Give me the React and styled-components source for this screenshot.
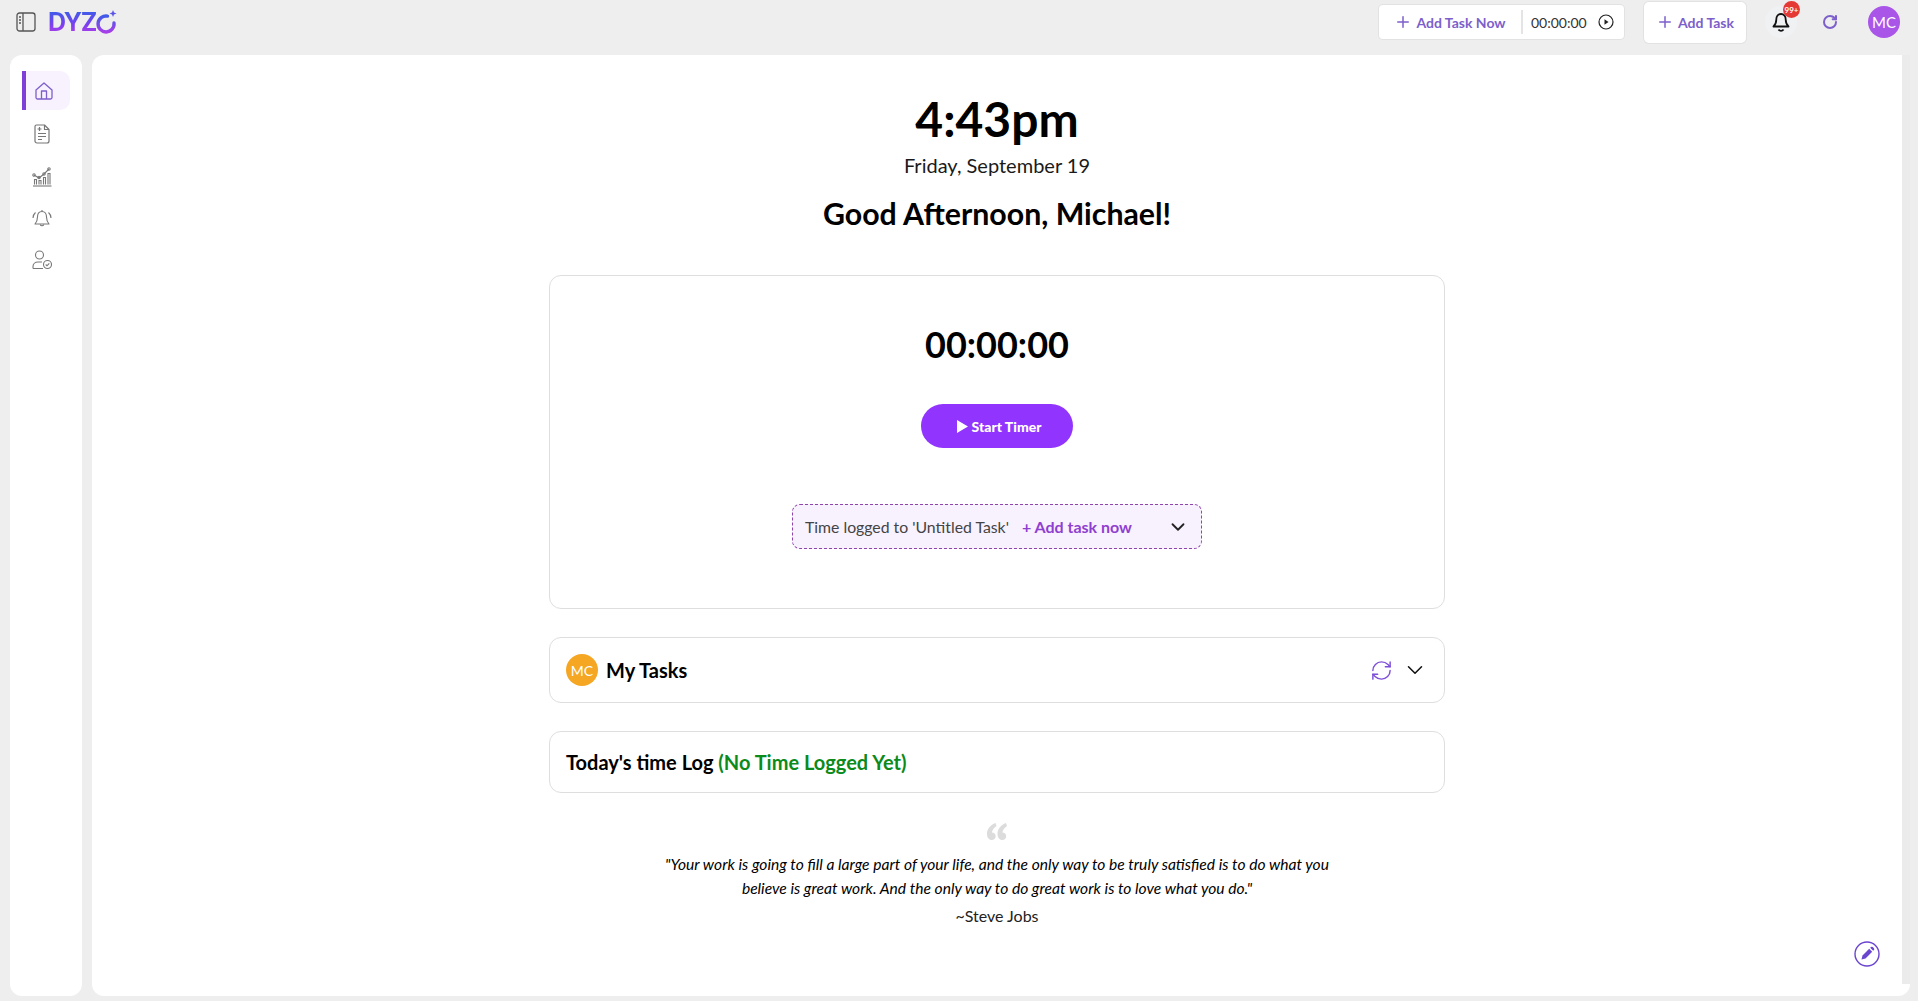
import styled, { createGlobalStyle } from 'styled-components'
import { ChevronDown, Plus, RefreshCw, RotateCw } from 'lucide-react'

const GlobalStyle = createGlobalStyle`
  html, body {
    margin: 0;
    padding: 0;
    height: 100%;
    overflow: hidden;
    background: #eeeeee;
    font-family: Lato, "Open Sans", sans-serif;
    color: #000;
  }
  * { box-sizing: border-box; }
`

const Page = styled.div`
  width: 1918px;
  height: 1001px;
  display: flex;
  flex-direction: column;
  background: #eeeeee;
`

const TopBar = styled.header`
  height: 55px;
  display: flex;
  align-items: center;
  justify-content: space-between;
  padding: 0 18px 11px 16px;
`

const Brand = styled.div`
  display: flex;
  align-items: center;
  gap: 12px;
`

const LogoWrap = styled.div`
  display: flex;
  align-items: center;
`

const LogoText = styled.span`
  font-family: Inter, Lato, sans-serif;
  font-size: 25px;
  font-weight: 700;
  line-height: 26px;
  letter-spacing: -1.2px;
  background: linear-gradient(180deg, #3f5be8 10%, #7b3ff0 60%, #a63fe8 90%);
  -webkit-background-clip: text;
  background-clip: text;
  color: transparent;
`

const Actions = styled.div`
  display: flex;
  align-items: center;
`

const TimerGroup = styled.div`
  width: 245px;
  height: 34px;
  background: #fff;
  border-radius: 4px;
  box-shadow: 0 0 0 1px #e2e2e2;
  display: flex;
  align-items: center;
  margin-right: 20px;
`

const AddNow = styled.div`
  width: 144px;
  height: 24px;
  border-right: 2px solid #e4e4e4;
  display: flex;
  align-items: center;
  justify-content: center;
  gap: 4px;
`

const ActionLabel = styled.span`
  font-size: 14px;
  font-weight: 700;
  color: #7d5fcb;
  white-space: nowrap;
`

const ClockText = styled.span`
  font-size: 14px;
  color: #333;
  margin-left: 8px;
  margin-right: 11px;
`

const AddTaskButton = styled.div`
  width: 102px;
  height: 41px;
  background: #fff;
  border-radius: 5px;
  box-shadow: 0 0 0 1px #e2e2e2;
  display: flex;
  align-items: center;
  justify-content: center;
  gap: 4px;
  margin-right: 19px;
`

const BellWrap = styled.div`
  position: relative;
  width: 32px;
  height: 32px;
  border-radius: 50%;
  background: #f0f1f3;
  display: flex;
  align-items: center;
  justify-content: center;
  margin-right: 25px;
`

const BellBadge = styled.span`
  position: absolute;
  top: -5px;
  right: -3px;
  width: 17px;
  height: 17px;
  border-radius: 50%;
  background: #e53935;
  color: #fff;
  font-size: 8px;
  font-weight: 700;
  display: flex;
  align-items: center;
  justify-content: center;
`

const Reload = styled.div`
  display: flex;
  color: #7d5fcb;
  margin-right: 30px;
`

const Avatar = styled.div`
  width: ${(props) => props.size}px;
  height: ${(props) => props.size}px;
  border-radius: 50%;
  background: ${(props) => props.bg};
  color: #fff;
  font-size: ${(props) => props.fs}px;
  display: flex;
  align-items: center;
  justify-content: center;
  flex-shrink: 0;
`

const Body = styled.div`
  flex: 1;
  display: flex;
  padding: 0 8px 5px 10px;
  min-height: 0;
`

const Sidebar = styled.nav`
  width: 72px;
  background: #fff;
  border-radius: 12px;
  padding: 16px 12px 0 12px;
  display: flex;
  flex-direction: column;
  margin-right: 10px;
`

const NavItem = styled.div`
  height: 39px;
  width: 48px;
  margin-bottom: ${(props) => props.gap}px;
  padding-right: 9px;
  display: flex;
  align-items: center;
  justify-content: center;
  border-radius: 0 10px 10px 0;
  ${(props) => props.active && `
    background: #f8f1fe;
    border-left: 4px solid #7e3fd8;
  `}
`

const Main = styled.main`
  flex: 1;
  background: #fff;
  border-radius: 12px 0 12px 12px;
  display: flex;
`

const Content = styled.div`
  flex: 1;
  display: flex;
  flex-direction: column;
  align-items: center;
  position: relative;
`

const Scrollbar = styled.div`
  width: 8px;
  background: #ebebeb;
  margin-bottom: 12px;
`

const Clock = styled.h1`
  margin: 34px 0 0;
  font-size: 48px;
  line-height: 60px;
  font-weight: 700;
`

const DateLine = styled.div`
  font-size: 20px;
  line-height: 24px;
  margin-top: 4px;
  color: #1a1a1a;
`

const Greeting = styled.h2`
  margin: 18px 0 0;
  font-size: 30.3px;
  line-height: 36px;
  font-weight: 700;
`

const TimerCard = styled.section`
  width: 896px;
  height: 334px;
  margin-top: 44px;
  border: 1px solid #dedede;
  border-radius: 12px;
  display: flex;
  flex-direction: column;
  align-items: center;
`

const BigTimer = styled.div`
  margin-top: 45px;
  font-size: 36px;
  line-height: 46px;
  font-weight: 700;
`

const StartButton = styled.button`
  width: 152px;
  height: 44px;
  margin-top: 37px;
  padding: 0 0 0 4px;
  border: 0;
  border-radius: 22px;
  background: #9134fd;
  color: #fff;
  font-family: inherit;
  font-size: 14px;
  font-weight: 900;
  display: flex;
  align-items: center;
  justify-content: center;
  gap: 4px;
`

const TaskPicker = styled.div`
  width: 410px;
  height: 45px;
  margin-top: 56px;
  padding: 0 12px 0 12px;
  background: #f8f1fe;
  border: 1px dashed #8e44ad;
  border-radius: 8px;
  display: flex;
  align-items: center;
`

const PickerText = styled.span`
  font-size: 15.8px;
  color: #444;
  white-space: nowrap;
`

const PickerLink = styled.span`
  font-size: 16px;
  font-weight: 700;
  color: #8f3fd0;
  margin-left: 13px;
  white-space: nowrap;
  flex: 1;
`

const Panel = styled.section`
  width: 896px;
  height: ${(props) => props.h}px;
  margin-top: ${(props) => props.mt}px;
  border: 1px solid #dedede;
  border-radius: 12px;
  padding: 0 16px;
  display: flex;
  align-items: center;
`

const PanelTitle = styled.span`
  font-size: 20px;
  font-weight: 700;
  margin-left: ${(props) => props.ml || 0}px;
  flex: ${(props) => (props.grow ? 1 : 'none')};
`

const GreenNote = styled.span`
  color: #0c8a1a;
`

const RoundIcon = styled.div`
  display: flex;
  color: ${(props) => props.color};
  margin-left: ${(props) => props.ml || 0}px;
`

const QuoteBlock = styled.div`
  margin-top: 30px;
  width: 680px;
  display: flex;
  flex-direction: column;
  align-items: center;
  text-align: center;
`

const QuoteText = styled.p`
  margin: 12px 0 0;
  font-size: 15.6px;
  line-height: 24px;
  font-style: italic;
`

const QuoteAuthor = styled.div`
  font-size: 16px;
  line-height: 24px;
  margin-top: 4px;
  color: #222;
`

const EditBadge = styled.div`
  position: absolute;
  right: 22px;
  bottom: 29px;
  display: flex;
`

const PanelToggle = () => (
  <svg width="20" height="20" viewBox="0 0 20 20" fill="none" stroke="#555" strokeWidth="1.3">
    <rect x="1" y="1" width="18" height="18" rx="2.500" />
    <path d="M7 1v18" />
    <path d="M3 5h2M3 8h2M3 11h2" strokeWidth="1.500" />
  </svg>
)

const LogoMark = () => (
  <svg width="21" height="26" viewBox="0 0 21 26" fill="none">
    <defs>
      <linearGradient id="logoO" x1="0" y1="0" x2="0" y2="1">
        <stop offset="0" stopColor="#3f5be8" />
        <stop offset="1" stopColor="#a63fe8" />
      </linearGradient>
    </defs>
    <path d="M11.500 7.100A8 8 0 1 0 18 14" stroke="url(#logoO)" strokeWidth="3.400" strokeLinecap="round" />
    <path d="M17 1l1 2.500 2.500 1-2.500 1-1 2.500-1-2.500-2.500-1 2.500-1z" fill="#5a55e8" />
  </svg>
)

const HomeIcon = () => (
  <svg width="20" height="20" viewBox="0 0 20 20" fill="none" stroke="#7d5fcb" strokeWidth="1.300" strokeLinejoin="round">
    <path d="M2 9l8-7 8 7v7.500a1.500 1.500 0 0 1-1.500 1.500h-13A1.500 1.500 0 0 1 2 16.500z" />
    <path d="M7.500 18v-8h5v8" />
  </svg>
)

const NoteIcon = () => (
  <svg width="16" height="20" viewBox="0 0 16 20" fill="none" stroke="#777" strokeWidth="1.200" strokeLinejoin="round">
    <path d="M2.500 1h8L15 5.500V17a2 2 0 0 1-2 2H3a2 2 0 0 1-2-2V2.500A1.500 1.500 0 0 1 2.500 1z" />
    <path d="M10.500 1v4.500H15" />
    <path d="M3.500 5h4M5.500 3v4M4 9.500h8M4 12.500h8M4 15.500h4" />
  </svg>
)

const ChartIcon = () => (
  <svg width="20" height="20" viewBox="0 0 20 20" fill="none" stroke="#777" strokeWidth="1.100">
    <path d="M1 19h18.500" />
    <path d="M2.500 17.500v-5h2v5M7 17.500v-4h2v4M11.500 17.500v-7h2v7M16 17.500v-11h2v11" />
    <path d="M2 8l5 3 5-4 5-5" />
    <circle cx="2" cy="8" r="1.200" />
    <circle cx="7" cy="10.500" r="1.200" />
    <circle cx="12" cy="7" r="1.200" />
    <circle cx="17" cy="2" r="1.200" />
  </svg>
)

const RingIcon = () => (
  <svg width="20" height="20" viewBox="0 0 20 20" fill="none" stroke="#777" strokeWidth="1.100" strokeLinejoin="round">
    <path d="M10 2.500c-3 0-4.500 2.500-4.500 5.500 0 3.500-1.300 5.500-2.500 7h14c-1.200-1.500-2.500-3.500-2.500-7 0-3-1.500-5.500-4.500-5.500z" />
    <path d="M8.200 15.500a1.900 1.900 0 0 0 3.600 0M10 1v1.500" />
    <path d="M3.500 3.500C1.800 5 1 7 1 9M16.500 3.500C18.200 5 19 7 19 9" />
  </svg>
)

const UserCheckIcon = () => (
  <svg width="20" height="20" viewBox="0 0 20 20" fill="none" stroke="#777" strokeWidth="1.100">
    <circle cx="7.500" cy="5" r="4" />
    <path d="M1 18.500v-2c0-2.500 2-4.500 5-4.500h4M1 18.500h10" />
    <circle cx="15.500" cy="14.500" r="4" />
    <path d="M13.700 14.500l1.300 1.300 2.300-2.500" />
  </svg>
)

const PlayCircle = () => (
  <svg width="16" height="16" viewBox="0 0 16 16" fill="none">
    <circle cx="8" cy="8" r="7" stroke="#222" strokeWidth="1.200" />
    <path d="M6.500 5.200l4 2.800-4 2.800z" fill="#222" />
  </svg>
)

const BellIcon = () => (
  <svg width="18" height="20" viewBox="0 0 18 20" fill="none" stroke="#111" strokeWidth="1.800" strokeLinejoin="round">
    <path d="M9 2C6 2 4.300 4.300 4.300 7.500c0 3.500-1.300 5.500-2.800 7h15c-1.500-1.500-2.800-3.500-2.800-7C13.700 4.300 12 2 9 2z" />
    <path d="M6.500 17.500a3 3 0 0 0 5 0" />
  </svg>
)

const PlayTriangle = () => (
  <svg width="11" height="13" viewBox="0 0 11 13">
    <path d="M0 0l11 6.500L0 13z" fill="#fff" />
  </svg>
)

const QuoteMark = () => (
  <svg width="20" height="17" viewBox="0 0 20 17" fill="#dcdcdc">
    <path d="M8.500 0C3.500 2 0 5.500 0 11c0 3.500 2 6 4.700 6 2.300 0 4-1.600 4-3.800 0-2.300-1.600-3.800-3.800-3.800 .3-2.500 2-4.700 4.600-6.500z" />
    <path d="M19 0c-5 2-8.500 5.500-8.500 11 0 3.500 2 6 4.700 6 2.300 0 4-1.600 4-3.800 0-2.300-1.600-3.800-3.800-3.800 .3-2.500 2-4.700 4.600-6.500z" />
  </svg>
)

const EditIcon = () => (
  <svg width="26" height="26" viewBox="0 0 26 26" fill="none">
    <circle cx="13" cy="13" r="12" stroke="#6a45cf" strokeWidth="1.400" />
    <path d="M7.500 18.500l1-4 6.700-6.700 3 3-6.700 6.700z" fill="#6a45cf" />
    <path d="M16.200 6.800l3 3 .7-.8a1.300 1.300 0 0 0 0-1.800l-1.100-1.100a1.300 1.300 0 0 0-1.800 0z" fill="#6a45cf" />
  </svg>
)

const navItems = [
  { icon: <HomeIcon />, gap: 4, active: true },
  { icon: <NoteIcon />, gap: 4 },
  { icon: <ChartIcon />, gap: 3 },
  { icon: <RingIcon />, gap: 2 },
  { icon: <UserCheckIcon />, gap: 0 },
]

const App = () => {
  return (
    <Page>
      <GlobalStyle />
      <TopBar>
        <Brand>
          <PanelToggle />
          <LogoWrap>
            <LogoText>DYZ</LogoText>
            <LogoMark />
          </LogoWrap>
        </Brand>
        <Actions>
          <TimerGroup>
            <AddNow>
              <Plus size={18} color="#7d5fcb" />
              <ActionLabel>Add Task Now</ActionLabel>
            </AddNow>
            <ClockText>00:00:00</ClockText>
            <PlayCircle />
          </TimerGroup>
          <AddTaskButton>
            <Plus size={18} color="#7d5fcb" />
            <ActionLabel>Add Task</ActionLabel>
          </AddTaskButton>
          <BellWrap>
            <BellIcon />
            <BellBadge>99+</BellBadge>
          </BellWrap>
          <Reload>
            <RotateCw size={16} strokeWidth={3} />
          </Reload>
          <Avatar size={32} bg="#a855e8" fs={15}>MC</Avatar>
        </Actions>
      </TopBar>
      <Body>
        <Sidebar>
          {navItems.map((item, i) => (
            <NavItem key={i} active={item.active} gap={item.gap}>
              {item.icon}
            </NavItem>
          ))}
        </Sidebar>
        <Main>
          <Content>
            <Clock>4:43pm</Clock>
            <DateLine>Friday, September 19</DateLine>
            <Greeting>Good Afternoon, Michael!</Greeting>
            <TimerCard>
              <BigTimer>00:00:00</BigTimer>
              <StartButton>
                <PlayTriangle />
                Start Timer
              </StartButton>
              <TaskPicker>
                <PickerText>Time logged to 'Untitled Task'</PickerText>
                <PickerLink>+ Add task now</PickerLink>
                <ChevronDown size={22} color="#222" />
              </TaskPicker>
            </TimerCard>
            <Panel h={66} mt={28}>
              <Avatar size={32} bg="#f5a623" fs={14}>MC</Avatar>
              <PanelTitle ml={8} grow>My Tasks</PanelTitle>
              <RoundIcon color="#7d4fd8"><RefreshCw size={23} strokeWidth={1.5} /></RoundIcon>
              <RoundIcon color="#111" ml={9}><ChevronDown size={26} strokeWidth={1.4} /></RoundIcon>
            </Panel>
            <Panel h={62} mt={28}>
              <PanelTitle>Today's time Log <GreenNote>(No Time Logged Yet)</GreenNote></PanelTitle>
            </Panel>
            <QuoteBlock>
              <QuoteMark />
              <QuoteText>
                "Your work is going to fill a large part of your life, and the only way to be truly satisfied is to do what you believe is great work. And the only way to do great work is to love what you do."
              </QuoteText>
              <QuoteAuthor>~Steve Jobs</QuoteAuthor>
            </QuoteBlock>
            <EditBadge><EditIcon /></EditBadge>
          </Content>
          <Scrollbar />
        </Main>
      </Body>
    </Page>
  )
}

export default App
